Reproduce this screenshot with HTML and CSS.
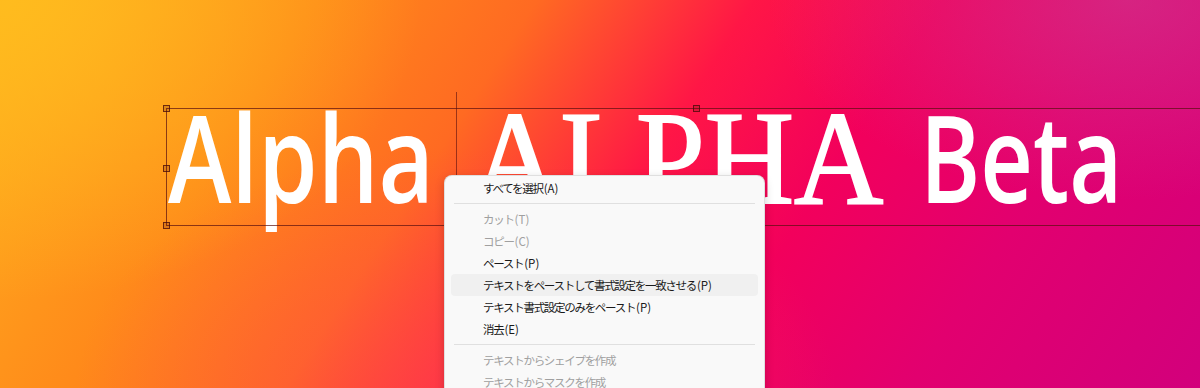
FILE: index.html
```html
<!DOCTYPE html>
<html lang="ja">
<head>
<meta charset="utf-8">
<title>Text context menu</title>
<link rel="stylesheet" href="styles.css">
</head>
<body>
<div class="stage">
  <div class="headline">
    <span class="slot slot-1"><span class="word sans alpha">Alpha</span></span>
    <span class="slot slot-2"><span class="word serif">ALPHA</span></span>
    <span class="slot slot-3"><span class="word sans beta">Beta</span></span>
  </div>

  <div class="frame">
    <span class="handle h-tl"></span>
    <span class="handle h-ml"></span>
    <span class="handle h-bl"></span>
    <span class="handle h-tm"></span>
  </div>
  <div class="caret"></div>

  <div class="menu">
    <div class="item">すべてを選択<span class="key">(A)</span></div>
    <div class="sep"></div>
    <div class="item disabled">カット<span class="key">(T)</span></div>
    <div class="item disabled">コピー<span class="key">(C)</span></div>
    <div class="item">ペースト<span class="key">(P)</span></div>
    <div class="item hover">テキストをペーストして書式設定を一致させる<span class="key">(P)</span></div>
    <div class="item">テキスト書式設定のみをペースト<span class="key">(P)</span></div>
    <div class="item">消去<span class="key">(E)</span></div>
    <div class="sep"></div>
    <div class="item disabled">テキストからシェイプを作成</div>
    <div class="item disabled">テキストからマスクを作成</div>
  </div>
</div>
</body>
</html>
```

FILE: styles.css
```css
html, body {
  margin: 0;
  padding: 0;
}

.stage {
  position: relative;
  width: 1200px;
  height: 388px;
  overflow: hidden;
  background:
    radial-gradient(ellipse 420px 300px at 0% 0%, rgba(255, 190, 30, 0.85), rgba(255, 190, 30, 0) 100%),
    radial-gradient(ellipse 360px 200px at 94% 0%, rgba(200, 70, 150, 0.5), rgba(200, 70, 150, 0) 100%),
    radial-gradient(ellipse 380px 240px at 38% 100%, rgba(255, 70, 85, 0.45), rgba(255, 70, 85, 0) 100%),
    linear-gradient(123deg, #ffb01e 0%, #ff8a1a 22%, #ff6a22 37%, #ff1646 52%, #f2005c 65%, #e2006f 80%, #d2007c 100%);
}

.headline {
  display: flex;
  align-items: baseline;
  line-height: 1;
  padding: 92px 0 0 168px;
  white-space: nowrap;
  color: #ffffff;
}

.slot {
  display: block;
  flex: none;
}

.slot-1 { width: 303px; }
.slot-2 { width: 449px; }

.word {
  display: inline-block;
  transform-origin: 0 50%;
}

.sans {
  font-family: "Open Sans", "Noto Sans", sans-serif;
  font-weight: 570;
  font-size: 122px;
}

.alpha { transform: scaleX(0.785); }
.beta { transform: scaleX(0.75); }

.serif {
  font-family: "Liberation Serif", serif;
  font-size: 133px;
  -webkit-text-stroke: 2px #ffffff;
  transform: scaleX(0.93);
}

.frame {
  position: absolute;
  left: 166px;
  top: 108px;
  width: 1200px;
  height: 116px;
  border: 1px solid rgba(90, 15, 15, 0.7);
  pointer-events: none;
}

.handle {
  position: absolute;
  width: 5px;
  height: 5px;
  border: 1px solid rgba(70, 10, 10, 0.75);
  background: rgba(90, 20, 10, 0.2);
}

.h-tl { left: -4px; top: -4px; }
.h-ml { left: -4px; top: 56px; }
.h-bl { left: -4px; top: 113px; }
.h-tm { left: 526px; top: -4px; }

.caret {
  position: absolute;
  left: 456px;
  top: 92px;
  width: 1px;
  height: 110px;
  background: rgba(90, 15, 15, 0.6);
}

.menu {
  position: absolute;
  left: 444px;
  top: 175px;
  width: 307px;
  height: 240px;
  padding: 1px 6px;
  background: #f9f9f9;
  border: 1px solid rgba(0, 0, 0, 0.1);
  border-radius: 8px;
  box-shadow: 0 3px 10px rgba(0, 0, 0, 0.18);
  font-family: "Noto Sans CJK JP", sans-serif;
  font-size: 11.5px;
  letter-spacing: -1.3px;
  color: #1a1a1a;
}

.item {
  height: 22px;
  line-height: 22px;
  padding-left: 32px;
  border-radius: 4px;
  white-space: nowrap;
}

.key {
  letter-spacing: 0;
  margin-left: 1px;
}

.item.disabled {
  color: #a0a0a0;
}

.item.hover {
  background: #f0f0f0;
}

.sep {
  height: 1px;
  margin: 4px 3px;
  background: #e0e0e0;
}
```
